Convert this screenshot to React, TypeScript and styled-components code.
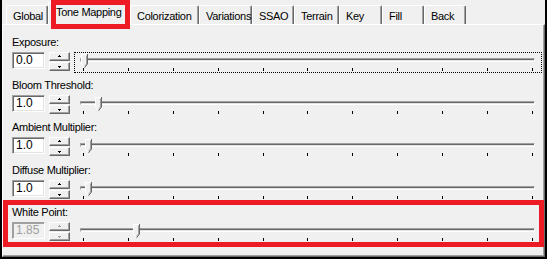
import React from "react";
import styled, { createGlobalStyle } from "styled-components";

type Setting = {
  label: string;
  value: string;
  thumb: number; // thumb centre, px from slider's left edge
  gap: number;
  focused?: boolean;
  disabled?: boolean;
  marked?: boolean;
};

const tabs = [
  { name: "Global", width: 42 },
  { name: "Tone Mapping", width: 82, active: true },
  { name: "Colorization", width: 69 },
  { name: "Variations", width: 53 },
  { name: "SSAO", width: 42 },
  { name: "Terrain", width: 45 },
  { name: "Key", width: 43 },
  { name: "Fill", width: 42 },
  { name: "Back", width: 42 },
];

const settings: Setting[] = [
  { label: "Exposure:", value: "0.0", thumb: 10, gap: 6, focused: true },
  { label: "Bloom Threshold:", value: "1.0", thumb: 23.5, gap: 5 },
  { label: "Ambient Multiplier:", value: "1.0", thumb: 13.5, gap: 6 },
  { label: "Diffuse Multiplier:", value: "1.0", thumb: 13.5, gap: 5 },
  { label: "White Point:", value: "1.85", thumb: 61.5, gap: 0, disabled: true, marked: true },
];

const GlobalStyle = createGlobalStyle`
  html, body { margin: 0; padding: 0; background: #f0f0f0; }
  body {
    font-family: "Liberation Sans", Arial, sans-serif;
    font-size: 11px;
    letter-spacing: -0.3px;
    color: #000;
  }
`;

const Frame = styled.div`
  width: 547px;
  height: 259px;
  box-sizing: border-box;
  border: 2px solid #000;
  border-top: none;
  background: #f0f0f0;
  display: flex;
  flex-direction: column;
`;

const TabStrip = styled.div`
  height: 24px;
  flex: none;
  display: flex;
  align-items: flex-end;
  padding-left: 4px;
`;

const Tab = styled.div<{ $w: number; $active?: boolean }>`
  position: relative;
  box-sizing: border-box;
  width: ${(p) => p.$w}px;
  height: ${(p) => (p.$active ? 22 : 19)}px;
  padding: ${(p) => (p.$active ? "3px 0 0 7px" : "4px 0 0 6px")};
  line-height: 13px;
  white-space: nowrap;
  border-top: 1px solid #fff;
  border-left: 1px solid #fff;
  border-right: 1px solid #696969;
  box-shadow: inset -1px 0 #a0a0a0;
  border-radius: 2px 2px 0 0;
  z-index: ${(p) => (p.$active ? 2 : 1)};

  ${(p) =>
    p.$active &&
    `
    &::after {
      content: "";
      position: absolute;
      left: 2px;
      right: -1px;
      top: -3px;
      height: 29px;
      box-sizing: border-box;
      border: 5px solid #ed1c24;
    }
  `}
`;

const Panel = styled.div`
  flex: 1;
  box-sizing: border-box;
  border-top: 1px solid #fff;
  border-left: 1px solid #fff;
  border-right: 1px solid #696969;
  border-bottom: 1px solid #696969;
  box-shadow: inset -1px -1px #a0a0a0;
  padding: 11px 0 0 9px;
`;

const Field = styled.div<{ $gap: number; $marked?: boolean }>`
  position: relative;
  display: flex;
  flex-direction: column;
  gap: 3px;
  margin-bottom: ${(p) => p.$gap}px;

  ${(p) =>
    p.$marked &&
    `
    &::after {
      content: "";
      position: absolute;
      top: -6px;
      left: -9px;
      right: 0;
      bottom: -4px;
      border: 5px solid #ed1c24;
    }
  `}
`;

const Label = styled.div`
  height: 13px;
  line-height: 13px;
  white-space: nowrap;
`;

const Controls = styled.div`
  display: flex;
  align-items: flex-start;
  height: 21px;
`;

const TextBox = styled.div<{ $disabled?: boolean }>`
  box-sizing: border-box;
  width: 33px;
  height: 17px;
  padding: 1px 0 0 3px;
  font-size: 12px;
  line-height: 13px;
  letter-spacing: 0;
  background: ${(p) => (p.$disabled ? "#f0f0f0" : "#fff")};
  color: ${(p) => (p.$disabled ? "#a0a0a0" : "#000")};
  border: 1px solid;
  border-color: #a0a0a0 #fff #fff #a0a0a0;
  box-shadow: ${(p) =>
    p.$disabled ? "inset 1px 1px #a0a0a0" : "inset 1px 1px #696969, inset -1px -1px #e3e3e3"};
`;

const Spin = styled.div`
  display: flex;
  flex-direction: column;
  gap: 1px;
  width: 21px;
  margin-left: 4px;
`;

const SpinButton = styled.div`
  box-sizing: border-box;
  height: 9px;
  display: flex;
  align-items: center;
  justify-content: center;
  background: #f0f0f0;
  border: 1px solid;
  border-color: #fff #696969 #696969 #fff;
  box-shadow: inset -1px -1px #a0a0a0;
`;

const Slider = styled.div<{ $focused?: boolean }>`
  position: relative;
  box-sizing: border-box;
  width: 468px;
  height: 21px;
  margin-left: 4px;
  border: 1px dotted ${(p) => (p.$focused ? "#000" : "transparent")};
  display: flex;
  flex-direction: column;
`;

const Track = styled.div`
  box-sizing: border-box;
  width: 455px;
  height: 4px;
  margin: 5px 0 0 5px;
  border-top: 1px solid #a0a0a0;
  border-left: 1px solid #a0a0a0;
  border-bottom: 1px solid #fff;
  border-right: 1px solid #fff;
  background: #e3e3e3;
  box-shadow: inset 0 1px #696969;
`;

const Ticks = styled.div`
  display: flex;
  justify-content: space-between;
  width: 450px;
  height: 3px;
  margin: 6px 0 0 8px;
`;

const Tick = styled.span`
  width: 1px;
  height: 3px;
  background: #000;
`;

const Thumb = styled.svg`
  position: absolute;
  top: 1px;
`;

function Arrow({ up, color }: { up?: boolean; color: string }) {
  return (
    <svg width="5" height="3" shapeRendering="crispEdges">
      {up ? (
        <>
          <rect x="2" y="0" width="1" height="1" fill={color} />
          <rect x="1" y="1" width="3" height="1" fill={color} />
        </>
      ) : (
        <>
          <rect x="1" y="1" width="3" height="1" fill={color} />
          <rect x="2" y="2" width="1" height="1" fill={color} />
        </>
      )}
    </svg>
  );
}

function SliderThumb({ center }: { center: number }) {
  return (
    <Thumb width="7" height="15" style={{ left: center - 4 }} shapeRendering="crispEdges">
      <path d="M0.5 0.5 H6.5 V10 L3.5 13.5 L0.5 10 Z" fill="#f0f0f0" />
      <path d="M0.5 10 V0.5 H6" stroke="#fff" fill="none" />
      <path d="M0.5 10 L3 13" stroke="#fff" fill="none" shapeRendering="auto" />
      <path d="M5.5 1.5 V10 L3.5 12.2" stroke="#a0a0a0" fill="none" shapeRendering="auto" />
      <path d="M6.5 0 V10 L3.5 13.8" stroke="#696969" fill="none" shapeRendering="auto" />
    </Thumb>
  );
}

function SettingRow({ s }: { s: Setting }) {
  const arrowColor = s.disabled ? "#a0a0a0" : "#000";
  return (
    <Field $gap={s.gap} $marked={s.marked}>
      <Label>{s.label}</Label>
      <Controls>
        <TextBox $disabled={s.disabled}>{s.value}</TextBox>
        <Spin>
          <SpinButton>
            <Arrow up color={arrowColor} />
          </SpinButton>
          <SpinButton>
            <Arrow color={arrowColor} />
          </SpinButton>
        </Spin>
        <Slider $focused={s.focused}>
          <Track />
          <Ticks>
            {Array.from({ length: 11 }).map((_, i) => (
              <Tick key={i} />
            ))}
          </Ticks>
          <SliderThumb center={s.thumb} />
        </Slider>
      </Controls>
    </Field>
  );
}

export default function App() {
  return (
    <>
      <GlobalStyle />
      <Frame>
        <TabStrip>
          {tabs.map((t) => (
            <Tab key={t.name} $w={t.width} $active={t.active}>
              {t.name}
            </Tab>
          ))}
        </TabStrip>
        <Panel>
          {settings.map((s) => (
            <SettingRow key={s.label} s={s} />
          ))}
        </Panel>
      </Frame>
    </>
  );
}
